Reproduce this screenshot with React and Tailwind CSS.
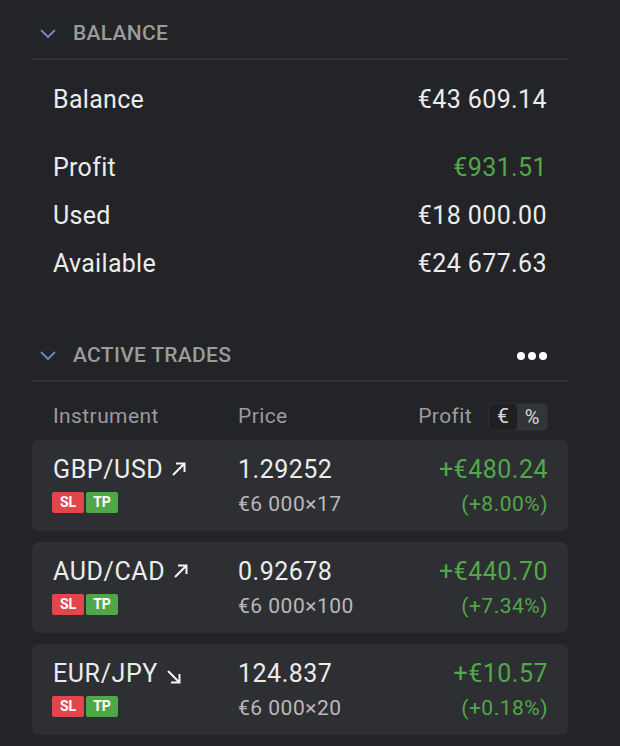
import React from "react";

const Chevron = () => (
  <svg width="16" height="10" viewBox="0 0 16 10" className="shrink-0">
    <path d="M1.5 1.5 L8 8 L14.5 1.5" fill="none" stroke="#6f86d6" strokeWidth="1.8" strokeLinecap="round" strokeLinejoin="round" />
  </svg>
);

const ArrowUp = () => (
  <svg width="16" height="16" viewBox="0 0 16 16" className="ml-[8px] mb-[2px]">
    <path d="M2 14 L13.5 2.5 M5 2.5 H13.5 V11" fill="none" stroke="#f4f4f4" strokeWidth="2" />
  </svg>
);
const ArrowDown = () => (
  <svg width="16" height="16" viewBox="0 0 16 16" className="ml-[8px] mt-[6px]">
    <path d="M2 2 L13.5 13.5 M13.5 5 V13.5 H5" fill="none" stroke="#f4f4f4" strokeWidth="2" />
  </svg>
);

const trades = [
  { sym: "GBP/USD", up: true, price: "1.29252", qty: "€6 000×17", p: "+€480.24", pc: "(+8.00%)" },
  { sym: "AUD/CAD", up: true, price: "0.92678", qty: "€6 000×100", p: "+€440.70", pc: "(+7.34%)" },
  { sym: "EUR/JPY", up: false, price: "124.837", qty: "€6 000×20", p: "+€10.57", pc: "(+0.18%)" },
];

export default function App() {
  return (
    <div
      className="w-[620px] h-[746px] overflow-hidden bg-[#232427] text-[#ececec] pl-[32px] pr-[52px]"
      style={{ fontFamily: "Roboto, 'Noto Sans', sans-serif" }}
    >
      {/* Balance header */}
      <div className="h-[60px] flex items-center border-b-2 border-[#333436] pl-[8px] pt-[10px]">
        <Chevron />
        <span className="ml-[17px] text-[21px] font-medium text-[#9b9b9b] tracking-[0.3px]">BALANCE</span>
      </div>
      <div className="px-[21px] text-[25px] tracking-[0.3px]">
        <div className="flex justify-between h-[48px] items-center mt-[16px]">
          <span>Balance</span><span className="tracking-[0.4px]">€43 609.14</span>
        </div>
        <div className="flex justify-between h-[48px] items-center mt-[20px]">
          <span>Profit</span><span className="text-[#53a74b] tracking-[0.4px]">€931.51</span>
        </div>
        <div className="flex justify-between h-[48px] items-center">
          <span>Used</span><span className="tracking-[0.4px]">€18 000.00</span>
        </div>
        <div className="flex justify-between h-[48px] items-center">
          <span>Available</span><span className="tracking-[0.4px]">€24 677.63</span>
        </div>
      </div>

      {/* Active trades header */}
      <div className="mt-[40px] h-[54px] flex items-center border-b-2 border-[#333436] pl-[8px] pt-[4px]">
        <Chevron />
        <span className="ml-[17px] text-[21px] font-medium text-[#9b9b9b] tracking-[0.3px]">ACTIVE TRADES</span>
        <div className="ml-auto mr-[21px] flex gap-[3px]">
          <span className="w-[8px] h-[8px] rounded-full bg-white" />
          <span className="w-[8px] h-[8px] rounded-full bg-white" />
          <span className="w-[8px] h-[8px] rounded-full bg-white" />
        </div>
      </div>

      {/* Column headers */}
      <div className="flex items-center h-[58px] pt-[12px] px-[20px] text-[21px] tracking-[0.4px] text-[#9b9b9b]">
        <span className="w-[186px] pl-[1px]">Instrument</span>
        <span>Price</span>
        <span className="ml-auto">Profit</span>
        <div className="ml-[16px] flex h-[28px] rounded-[5px] bg-[#333437] border border-[#2c2d30] overflow-hidden tracking-normal">
          <span className="w-[28px] flex items-center justify-center bg-[#1f2022] text-[#d8d8d8] text-[21px] rounded-[4px]">€</span>
          <span className="w-[30px] flex items-center justify-center text-[#d8d8d8] text-[20px]">%</span>
        </div>
      </div>

      {/* Trades */}
      <div className="flex flex-col gap-[11px]">
        {trades.map((t) => (
          <div key={t.sym} className="h-[91px] rounded-[7px] bg-[#2e2f32] px-[20px] pt-[14px] flex">
            <div className="w-[186px]">
              <div className="flex items-center text-[25px] tracking-[0.6px] h-[32px] pl-[1px]">
                {t.sym}
                {t.up ? <ArrowUp /> : <ArrowDown />}
              </div>
              <div className="flex gap-[2px] mt-[6px]">
                <span className="w-[32px] h-[21px] rounded-[2px] bg-[#e2464b] text-white text-[14px] font-bold flex items-center justify-center">SL</span>
                <span className="w-[32px] h-[21px] rounded-[2px] bg-[#52a64a] text-white text-[14px] font-bold flex items-center justify-center">TP</span>
              </div>
            </div>
            <div>
              <div className="text-[25px] tracking-[0.5px] h-[32px] flex items-center">{t.price}</div>
              <div className="text-[21px] tracking-[0.5px] text-[#b9b9b9] mt-[3px]">{t.qty}</div>
            </div>
            <div className="ml-auto text-right text-[#53a74b]">
              <div className="text-[25px] tracking-[0.5px] h-[32px] flex items-center justify-end">{t.p}</div>
              <div className="text-[21px] tracking-[0.5px] mt-[3px]">{t.pc}</div>
            </div>
          </div>
        ))}
      </div>
    </div>
  );
}
